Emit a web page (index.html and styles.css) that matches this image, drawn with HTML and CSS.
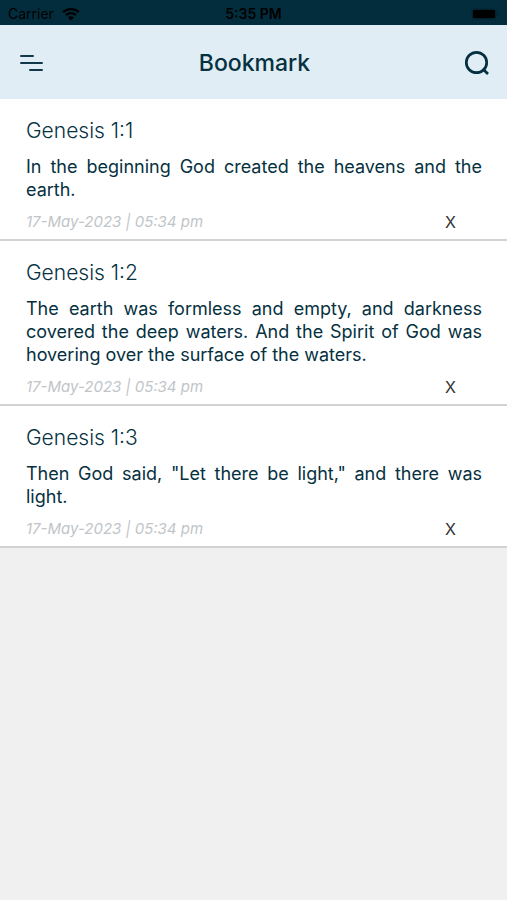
FILE: index.html
```html
<!DOCTYPE html>
<html lang="en">
<head>
<meta charset="utf-8">
<meta name="viewport" content="width=device-width, initial-scale=1">
<title>Bookmark</title>
<link rel="stylesheet" href="styles.css">
</head>
<body>
<div class="status">
  <div class="carrier">
    <span>Carrier</span>
    <svg width="18" height="14" viewBox="0 0 18 14" aria-hidden="true">
      <path d="M1.2 5.2a11.2 11.2 0 0 1 15.6 0M4 8.1a7.2 7.2 0 0 1 10 0" fill="none" stroke="#000" stroke-width="2.3"/>
      <path d="M9 13.6 5.9 10.8a4.500 4.500 0 0 1 6.2 0z" fill="#000"/>
    </svg>
  </div>
  <span class="clock">5:35 PM</span>
  <svg class="battery" width="28" height="12" viewBox="0 0 28 12" aria-hidden="true">
    <rect x=".5" y=".5" width="25" height="11" rx="3" fill="#00212e"/>
    <rect x="2" y="2" width="22" height="8" rx="1.500" fill="#000"/>
    <path d="M26.500 4v4q1-.6 1-2t-1-2z" fill="#00212e"/>
  </svg>
</div>
<header class="bar">
  <button class="icon" type="button" aria-label="Menu">
    <svg width="24" height="18" viewBox="0 0 24 18" fill="none" stroke="#12394a" stroke-width="2" stroke-linecap="round">
      <path d="M2 2h12M2 9h21M11 16H23"/>
    </svg>
  </button>
  <h1>Bookmark</h1>
  <button class="icon search" type="button" aria-label="Search">
    <svg width="26" height="26" viewBox="0 0 26 26" fill="none" stroke="#032f3e" stroke-width="2.700">
      <circle cx="12.500" cy="12.500" r="10.200"/>
      <path d="M18.700 18.700 24 24"/>
    </svg>
  </button>
</header>
<main>
  <article>
    <h2>Genesis 1:1</h2>
    <p>In the beginning God created the heavens and the earth.</p>
    <footer><time datetime="2023-05-17T17:34">17-May-2023 | 05:34 pm</time><button type="button" aria-label="X, remove Genesis 1:1">X</button></footer>
  </article>
  <article>
    <h2>Genesis 1:2</h2>
    <p>The earth was formless and empty, and darkness covered the deep waters. And the Spirit of God was hovering over the surface of the waters.</p>
    <footer><time datetime="2023-05-17T17:34">17-May-2023 | 05:34 pm</time><button type="button" aria-label="X, remove Genesis 1:2">X</button></footer>
  </article>
  <article>
    <h2>Genesis 1:3</h2>
    <p>Then God said, "Let there be light," and there was light.</p>
    <footer><time datetime="2023-05-17T17:34">17-May-2023 | 05:34 pm</time><button type="button" aria-label="X, remove Genesis 1:3">X</button></footer>
  </article>
</main>
</body>
</html>
```
FILE: styles.css
```css
* { box-sizing: border-box; }
body {
  margin: 0;
  background: #f0f0f0;
  color: #06313f;
  font-family: Inter, "Liberation Sans", sans-serif;
}
h1, h2, p { margin: 0; }
button {
  padding: 0;
  border: 0;
  background: none;
  color: inherit;
  font: inherit;
  cursor: pointer;
}
svg { display: block; }
.status {
  display: grid;
  grid-template-columns: 1fr auto 1fr;
  align-items: center;
  height: 25px;
  padding: 2px 8px 0;
  background: #032d3c;
  color: #000;
  font-size: 14px;
  line-height: 22px;
}
.carrier { display: flex; align-items: center; gap: 8px; }
.clock { font-weight: 600; }
.battery { justify-self: end; }
.bar {
  display: grid;
  grid-template-columns: 1fr auto 1fr;
  align-items: center;
  height: 74px;
  padding: 1px 17px 0 19px;
  background: #e0edf5;
}
.icon { justify-self: start; }
.search { justify-self: end; }
h1 {
  font-size: 23px;
  line-height: 28px;
  font-weight: 450;
}
article {
  padding: 20px 25px 7px 26px;
  background: #fff;
  border-bottom: 2px solid #d3d3d3;
}
h2 {
  font-size: 21px;
  line-height: 24px;
  font-weight: 300;
}
p {
  margin: 12px 0 11px;
  font-size: 18px;
  line-height: 23px;
  text-align: justify;
}
footer {
  display: flex;
  justify-content: space-between;
  height: 20px;
  padding-right: 26px;
  line-height: 20px;
}
time {
  color: #bfc5c9;
  font-size: 15px;
  font-style: italic;
}
footer button {
  color: #333;
  font-size: 16px;
}
```
